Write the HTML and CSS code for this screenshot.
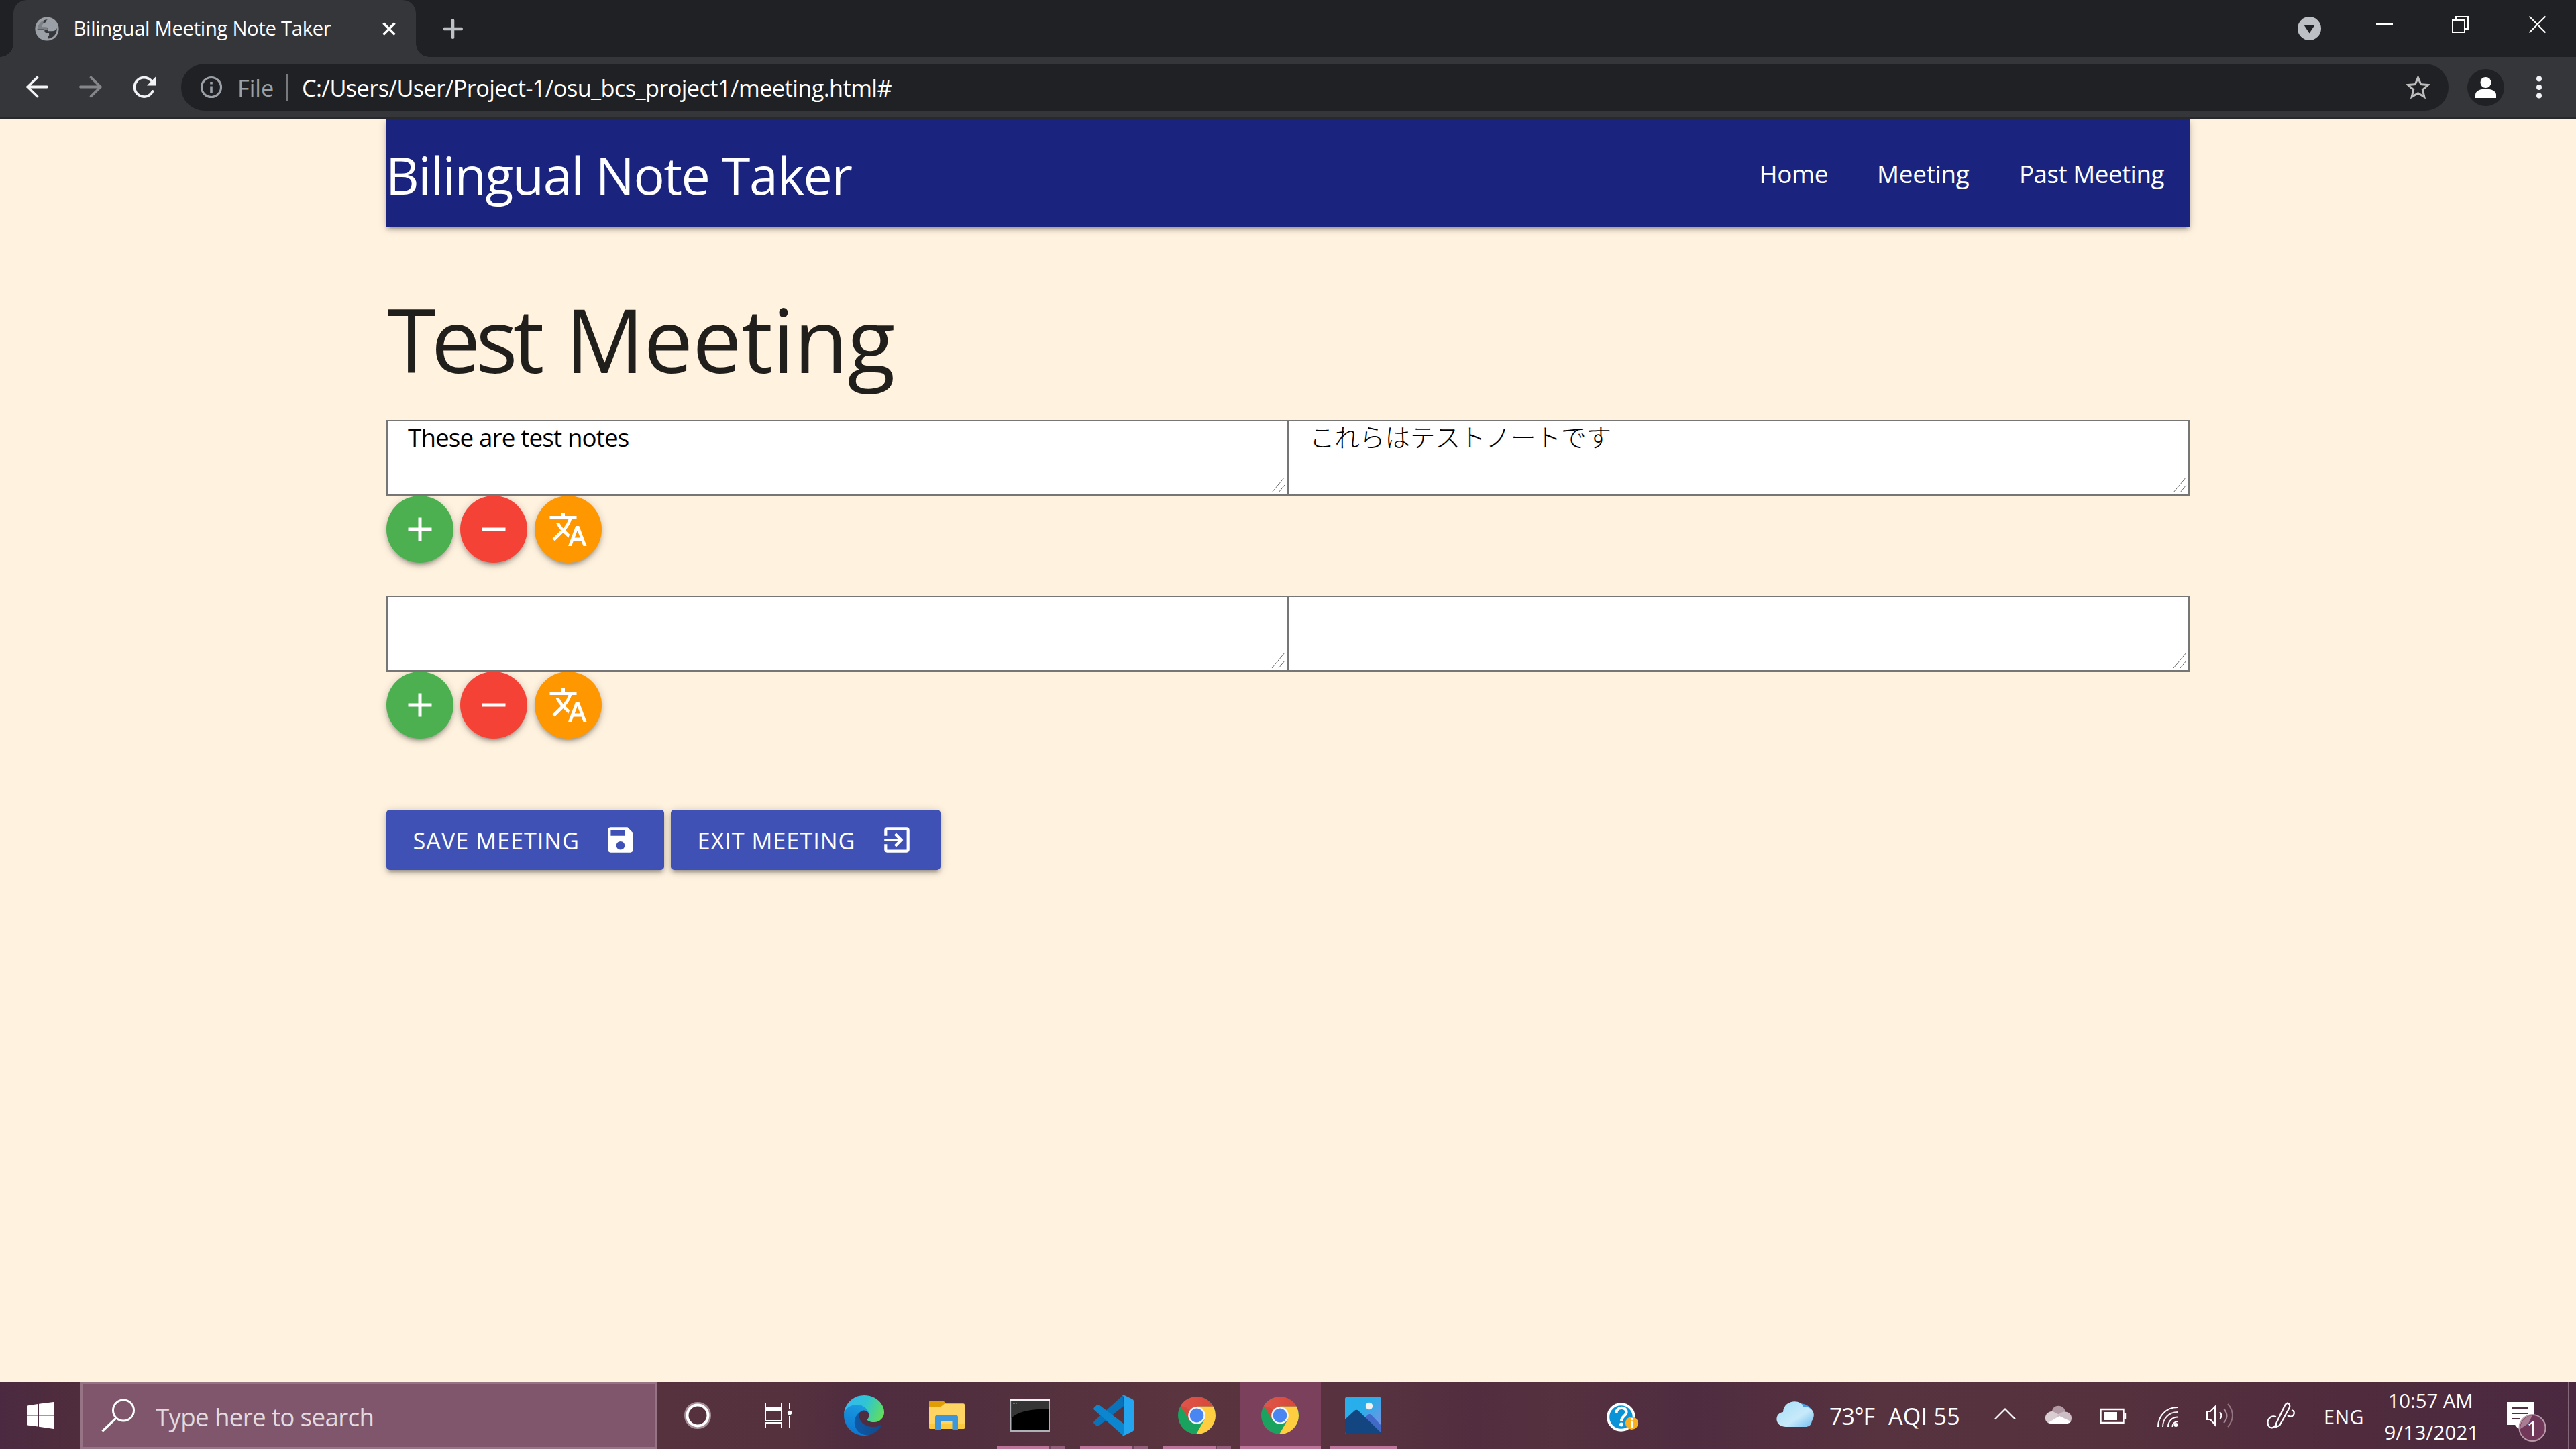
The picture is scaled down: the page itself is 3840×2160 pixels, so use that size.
FILE: index.html
```html
<!DOCTYPE html>
<html lang="en">
<head>
<meta charset="utf-8">
<title>Bilingual Meeting Note Taker</title>
<link rel="stylesheet" href="styles.css">
</head>
<body>
<svg class="defs" width="0" height="0" aria-hidden="true">
  <defs>
    <symbol id="i-translate" viewBox="0 0 24 24"><path d="M12.87 15.07l-2.54-2.51.03-.03c1.74-1.94 2.98-4.17 3.71-6.53H17V4h-7V2H8v2H1v1.99h11.17C11.5 7.92 10.44 9.75 9 11.35 8.07 10.32 7.3 9.19 6.69 8h-2c.73 1.63 1.73 3.17 2.98 4.56l-5.09 5.02L4 19l5-5 3.11 3.11.76-2.04zM18.5 10h-2L12 22h2l1.12-3h4.75L21 22h2l-4.5-12zm-2.62 7l1.62-4.33L19.12 17h-3.24z"/></symbol>
    <symbol id="i-add" viewBox="0 0 24 24"><path d="M19 13h-6v6h-2v-6H5v-2h6V5h2v6h6v2z"/></symbol>
    <symbol id="i-remove" viewBox="0 0 24 24"><path d="M19 13H5v-2h14v2z"/></symbol>
    <symbol id="i-grip" viewBox="0 0 24 24"><path d="M2 22L21 -1M12 22l9-11" stroke="#6a6a6a" stroke-width="1" fill="none"/></symbol>
    <linearGradient id="c-red" x1="0" y1="0" x2="1" y2="0"><stop offset="0" stop-color="#e0564a"/><stop offset="1" stop-color="#d8473a"/></linearGradient>
    <symbol id="i-chrome" viewBox="-28 -28 56 56">
      <circle r="28" fill="#1aa35e"/>
      <path d="M-24.2-14A28 28 0 0 1 24.6-13.2H0L-11.4 6.5Z" fill="url(#c-red)"/>
      <path d="M24.6-13.2A28 28 0 0 1-1 28L11.4 6.5 0-13.2Z" fill="#ffcd40"/>
      <path d="M-24.2-14L-11.4 6.5-7-5-16-12Z" fill="#c5392c" opacity=".35"/>
      <circle r="12.8" fill="#f4f6f8"/><circle r="10.4" fill="#4a86f2"/>
    </symbol>
  </defs>
</svg>

<header class="browser">
  <div class="tabstrip">
    <div class="tab">
      <svg class="favicon" viewBox="0 0 36 36"><circle cx="18" cy="18" r="17.6" fill="#9aa0a6"/><path d="M19 4.200c-3 1.500-2 3.800-4 4.600-2.400.8-4 1.600-4 4v3h6c2 0 2.600 1.400 2.600 3v2.400h6.200c3.300 0 5.600-1.200 7-4.200C33 25.500 27.500 31.500 20.300 32.500c-1.400-1.800-.6-3.700.8-4.800V24h-3.700c-2 0-3-1.200-3-3v-2H3.600C4.300 10.500 10.500 4.300 19 4.200z" fill="#35363a"/><path d="M3 18.500C3.300 11 8 6 14 4.300L11 13v3l6 .4c1.600 0 2 1 2 2.600h-4.600l-1-.5z" fill="#9aa0a6" opacity=".7"/></svg>
      <span class="tab-title">Bilingual Meeting Note Taker</span>
      <svg class="tab-close" viewBox="0 0 20 20"><path d="M1.500 1.500l17 17M18.500 1.500l-17 17" stroke="#fff" stroke-width="3.600" fill="none"/></svg>
    </div>
    <svg class="newtab" viewBox="0 0 30 30"><path d="M15 2.300v25.400M2.300 15h25.400" stroke="#bdc1c6" stroke-width="4.600" stroke-linecap="round"/></svg>
    <svg class="winctl" viewBox="3420 0 420 85">
      <circle cx="3442.500" cy="42.500" r="17.500" fill="#bdc1c6"/><path d="M3434.500 37.500h16l-8 12z" fill="#202124"/>
      <g stroke="#fff" stroke-width="2" fill="none"><path d="M3542 36h25"/><path d="M3656 30h18v18h-18zM3661 30v-5h18v18h-5"/><path d="M3770.500 24.500l24 24M3794.500 24.500l-24 24"/></g>
    </svg>
  </div>
  <div class="toolbar">
    <svg class="nav-icons" viewBox="0 85 270 90">
      <g fill="none" stroke-width="3.800" stroke-linecap="round" stroke-linejoin="round">
        <path d="M70 129.500H41M55.500 115.500l-14.500 14 14.500 14" stroke="#f1f3f4"/>
        <path d="M120 129.500h29M135.500 115.500l14.500 14-14.500 14" stroke="#84868a"/>
        <path d="M227.500 136a14.200 14.200 0 1 1-2.500-16" stroke="#f1f3f4"/>
      </g>
      <path d="M232.500 114v13.500H219z" fill="#f1f3f4"/>
    </svg>
    <div class="omnibox">
      <svg class="info" viewBox="0 0 34 34"><circle cx="17" cy="17" r="14.500" stroke="#9aa0a6" stroke-width="3.200" fill="none"/><path d="M17 9v3.600M17 15.500v9.500" stroke="#9aa0a6" stroke-width="3.600"/></svg>
      <span class="scheme">File</span>
      <span class="sep"></span>
      <span class="url">C:/Users/User/Project-1/osu_bcs_project1/meeting.html#</span>
      <svg class="star" viewBox="0 0 24 24"><path d="M22 9.240l-7.190-.62L12 2 9.190 8.630 2 9.240l5.460 4.730L5.820 21 12 17.270 18.180 21l-1.630-7.030L22 9.240zM12 15.400l-3.760 2.270 1-4.280-3.320-2.880 4.380-.38L12 6.100l1.710 4.040 4.380.38-3.320 2.880 1 4.280L12 15.400z" fill="#bdbdbd"/></svg>
    </div>
    <svg class="menu-icons" viewBox="3650 85 190 90">
      <circle cx="3705.500" cy="130.500" r="27.500" fill="#202124"/><circle cx="3705.500" cy="123" r="8" fill="#fff"/>
      <path d="M3690 146v-5c0-6 8-8.500 15.500-8.500s15.500 2.500 15.500 8.500v5z" fill="#fff"/>
      <g fill="#f1f3f4"><circle cx="3785" cy="117.500" r="4"/><circle cx="3785" cy="130" r="4"/><circle cx="3785" cy="142.500" r="4"/></g>
    </svg>
  </div>
</header>

<main class="page">
  <div class="container">
    <nav class="navbar">
      <a class="brand">Bilingual Note Taker</a>
      <div class="links"><a class="l-home">Home</a><a class="l-meeting">Meeting</a><a class="l-past">Past Meeting</a></div>
    </nav>
    <h1 class="title"><span class="word-a">Test</span> <span class="word-b">Meeting</span></h1>

    <section class="note">
      <div class="areas">
        <div class="area">These are test notes<svg class="grip"><use href="#i-grip"/></svg></div>
        <div class="area ja" lang="ja">これらはテストノートです<svg class="grip"><use href="#i-grip"/></svg></div>
      </div>
      <div class="actions">
        <a class="fab green"><svg><use href="#i-add"/></svg></a>
        <a class="fab red"><svg><use href="#i-remove"/></svg></a>
        <a class="fab orange"><svg><use href="#i-translate"/></svg></a>
      </div>
    </section>
    <section class="note">
      <div class="areas">
        <div class="area"><svg class="grip"><use href="#i-grip"/></svg></div>
        <div class="area"><svg class="grip"><use href="#i-grip"/></svg></div>
      </div>
      <div class="actions">
        <a class="fab green"><svg><use href="#i-add"/></svg></a>
        <a class="fab red"><svg><use href="#i-remove"/></svg></a>
        <a class="fab orange"><svg><use href="#i-translate"/></svg></a>
      </div>
    </section>

    <div class="buttons">
      <a class="btn save"><span>SAVE MEETING</span><svg viewBox="0 0 24 24"><path d="M17 3H5c-1.110 0-2 .9-2 2v14c0 1.100.89 2 2 2h14c1.100 0 2-.9 2-2V7l-4-4zm-5 16c-1.660 0-3-1.340-3-3s1.340-3 3-3 3 1.340 3 3-1.340 3-3 3zm3-10H5V5h10v4z"/></svg></a>
      <a class="btn exit"><span>EXIT MEETING</span><svg viewBox="0 0 24 24"><path d="M10.090 15.590L11.500 17l5-5-5-5-1.410 1.410L12.670 11H3v2h9.670l-2.580 2.590zM19 3H5c-1.110 0-2 .9-2 2v4h2V5h14v14H5v-4H3v4c0 1.100.89 2 2 2h14c1.100 0 2-.9 2-2V5c0-1.100-.9-2-2-2z"/></svg></a>
    </div>
  </div>
</main>

<footer class="taskbar">
  <div class="start"><svg viewBox="0 0 40 40"><path d="M0 5.500L16.500 3v16H0zM18 2.800L40 0v19H18zM0 20.500h16.500v16L0 34.500zM18 20.500h22V40l-22-3.200z" fill="#fff"/></svg></div>
  <div class="search">
    <svg viewBox="0 0 50 50"><circle cx="33" cy="17.500" r="15.500" stroke="#fff" stroke-width="3" fill="none"/><path d="M22 29L1.500 48.500" stroke="#fff" stroke-width="3.200"/></svg>
    <span>Type here to search</span>
  </div>
  <div class="sys"><svg viewBox="980 2060 120 100"><circle cx="1040" cy="2110" r="18" stroke="#a68d98" stroke-width="4" fill="none"/><circle cx="1040" cy="2110" r="15.500" stroke="#fff" stroke-width="4" fill="none"/></svg></div>
  <div class="sys"><svg viewBox="1100 2060 120 100"><g stroke="#fff" stroke-width="2" fill="none"><path d="M1141 2091v8h24v-8M1141 2102h24v16h-24zM1141 2129v-8h24v8M1177 2091v10M1177 2111v18"/></g><circle cx="1177" cy="2106" r="3.200" fill="#fff"/></svg></div>
  <div class="apps">
    <div class="app"><svg width="60" height="60" viewBox="0 0 256 256">
      <defs>
        <linearGradient id="e1" x1="0" x2="1"><stop offset="0" stop-color="#0f5aa8"/><stop offset="1" stop-color="#114a8b"/></linearGradient>
        <linearGradient id="e2" x1=".6" y1="0" x2=".3" y2="1"><stop offset="0" stop-color="#1b9de2"/><stop offset="1" stop-color="#0a75d1"/></linearGradient>
        <linearGradient id="e3" x1="0" y1=".3" x2="1" y2=".6"><stop offset="0" stop-color="#35b7f3"/><stop offset=".5" stop-color="#2fc5d2"/><stop offset="1" stop-color="#62dd5c"/></linearGradient>
      </defs>
      <path fill="url(#e1)" d="M231 190.500c-3.400 1.800-6.900 3.400-10.500 4.700-11.500 4.300-23.600 6.500-35.900 6.500-47.300 0-88.500-32.500-88.500-74.300.1-11.400 6.400-21.900 16.400-27.300-42.800 1.800-53.800 46.400-53.800 72.500 0 74 68.100 81.400 82.800 81.400 7.900 0 19.800-2.300 27-4.600l1.300-.4c27.600-9.500 51-28.100 66.600-52.800 1.200-1.900.6-4.300-1.200-5.500-1.300-.8-2.900-.9-4.200-.2z"/>
      <path fill="url(#e2)" d="M105.700 241.400c-8.900-5.500-16.600-12.800-22.700-21.300-26.300-36-18.400-86.500 17.600-112.800 3.800-2.700 7.700-5.200 11.900-7.200 3.100-1.500 8.400-4.100 15.500-4 10.100.1 19.600 4.900 25.700 13 4 5.400 6.300 11.900 6.400 18.700 0-.2 24.500-79.600-80-79.600-43.900 0-80 41.700-80 78.200-.2 19.300 4 38.500 12.100 56 27.600 58.800 94.800 87.600 156.400 67.100-21.100 6.600-44.100 3.700-62.900-8.100z"/>
      <path fill="url(#e3)" d="M152.300 148.900c-.8 1-3.300 2.500-3.300 5.700 0 2.600 1.700 5.100 4.700 7.200 14.400 10 41.500 8.700 41.600 8.700 10.700 0 21.100-2.900 30.300-8.300 18.800-11 30.400-31.100 30.400-52.900.3-22.400-8-37.300-11.300-43.900C223.500 23.900 177.700 0 128 0 58 0 1 56.200 0 126.200c.5-36.500 36.800-66 80-66 3.500 0 23.500.3 42 10.100 16.300 8.600 24.900 18.900 30.800 29.200 6.200 10.700 7.300 24.100 7.300 29.500s-2.700 13.300-7.800 19.900z"/>
    </svg></div>
    <div class="app"><svg width="53" height="44" viewBox="0 0 53 44"><path d="M0 9V1.500Q0 0 1.500 0H19q2 0 3.500 1.500L25 5v4z" fill="#e09e04"/><path d="M0 9h17.500l6-4.800H51q2 0 2 2V40q0 2-2 2H2q-2 0-2-2z" fill="#fed462"/><path d="M0 34h53v6q0 2-2 2H2q-2 0-2-2z" fill="#fbc93d"/><path d="M9 44V24.500q0-2.500 2.500-2.500h29q2.500 0 2.500 2.500V44h-8.500V31h-17v13z" fill="#3d97da"/></svg></div>
    <div class="app multi"><svg width="59" height="48" viewBox="0 0 59 48"><path d="M0 0h59v48H0z" fill="#aeb2b6"/><path d="M0 0h59v2.500H0z" fill="#f1f2f4"/><path d="M1.500 3h56v43h-56z" fill="#000"/><path d="M1.500 3h56v12C35 14 12 17 1.500 28z" fill="#353535"/><path d="M4 6h3M8 6h2M5 8.500h5" stroke="#aaa"/></svg></div>
    <div class="app multi"><svg width="60" height="60" viewBox="0 0 60 60"><path d="M44 0l1 16L8 45.500q-2 1-4-.5l-3.500-3.500q-1-1.500.5-3z" fill="#0a72b8"/><path d="M.8 21.500q-1.300-1.500 0-3L5 14.500q2-1 4 .3L46 43l-1 17q-2-.5-3-2z" fill="#0b86cf"/><path d="M43 .6q1.500-1 3.500-.3L58 5.800q2 1 2 3V51q0 2-2 3l-11.500 5.600q-2 .8-3.800-.3 2.300.3 2.300-2.800V3.800Q45 1 43 .6z" fill="#23a6ef"/></svg></div>
    <div class="app multi"><svg width="56" height="56"><use href="#i-chrome"/></svg></div>
    <div class="app active"><svg width="56" height="56"><use href="#i-chrome"/></svg></div>
    <div class="app single"><svg width="54" height="54" viewBox="0 0 54 54"><defs><linearGradient id="p1" x1="0" y1="0" x2="1" y2="1"><stop offset=".4" stop-color="#28aeea"/><stop offset="1" stop-color="#8a8be0"/></linearGradient></defs><rect width="54" height="54" rx="2" fill="url(#p1)"/><circle cx="36" cy="13" r="5.200" fill="#f1f1f1"/><path d="M24 37l10-11q2.500-2 5 0l15 16v12H30z" fill="#4169c8"/><path d="M0 33l14-13q3-2.500 6 0l34 33v1H2q-2 0-2-2z" fill="#134580"/></svg></div>
  </div>
  <svg class="help" width="60" height="100" viewBox="2390 2060 60 100"><circle cx="2416.500" cy="2112.500" r="19.300" fill="#0a93d6" stroke="#fff" stroke-width="4"/><path d="M2409.500 2106c0-9 15-9.500 15-1 0 6-7 5.500-7.500 13" stroke="#fff" stroke-width="4.200" fill="none"/><circle cx="2417" cy="2123.500" r="3" fill="#fff"/><circle cx="2432.500" cy="2121.500" r="9.600" fill="#f8b020"/><path d="M2433 2114v3.200M2433 2119v9" stroke="#fff" stroke-width="3.200"/></svg>
  <div class="tray">
    <svg width="72" height="100" viewBox="2640 2060 72 100"><defs><linearGradient id="w" x1="0" x2="1" y2="1"><stop offset="0" stop-color="#a4def8"/><stop offset=".6" stop-color="#c8eafa"/><stop offset="1" stop-color="#6fbdf0"/></linearGradient></defs><path d="M2682 2092c10 0 17 5 20 13l-4 17-24-10z" fill="#4a9de0"/><path d="M2663 2127c-19 0-18-21-5-22 1-19 27-20 30-8 16 0 19 13 13 21-1 7-5 9-10 9z" fill="url(#w)"/></svg>
    <span class="t-temp">73°F</span>
    <span class="t-aqi">AQI 55</span>
    <svg width="48" height="100" viewBox="2965 2060 48 100"><path d="M2974 2115.500l15-15 15 15" stroke="#fff" stroke-width="2.200" fill="none"/></svg>
    <svg width="58" height="100" viewBox="3040 2060 58 100"><path d="M3059 2104c1-11 18-11 20 1l-10 12z" fill="#b199a3"/><path d="M3053 2121c-8-4-4-18 7-17l14 7-9 11z" fill="#d9cdd2"/><path d="M3066 2112c8-12 22-8 22 2 0 5-3 7-5 7z" fill="#cdbec5"/><path d="M3053 2121l17-10 17 8q-2 3-5 3h-25q-3 0-4-1z" fill="#fff"/></svg>
    <svg width="56" height="100" viewBox="3122 2060 56 100"><path d="M3131.500 2101h34v20h-34zM3168 2107v8" stroke="#fff" stroke-width="2.400" fill="none"/><path d="M3136 2105h20v12h-20z" fill="#fff"/></svg>
    <svg width="48" height="100" viewBox="3208 2060 48 100"><g stroke="#fff" stroke-width="2" fill="none"><path d="M3217 2127c0-16 12-29 29-29"/><path d="M3224 2127c0-12 9-22 22-22" opacity=".9"/><path d="M3232 2127c0-8 6-14.500 14-14.500"/><path d="M3238.500 2127c0-4.500 3-8 7.500-8"/></g><circle cx="3243.500" cy="2124" r="3" fill="#fff"/></svg>
    <svg width="58" height="100" viewBox="3280 2060 58 100"><g stroke="#fff" stroke-width="2" fill="none"><path d="M3290 2104h5l7-7v27l-7-8h-5z"/><path d="M3309 2105q5 5 0 11"/><path d="M3315 2100q9 11 0 21" stroke="#a68d98"/><path d="M3321 2093q14 17 0 34" stroke="#917480"/></g></svg>
    <svg width="56" height="100" viewBox="3372 2060 56 100"><g stroke="#fff" stroke-width="2.300" fill="none" stroke-linejoin="round"><path d="M3393 2122l13-27q4-6 7-1 1 3-1 6l-14 25-5 2z"/><path d="M3393 2112c-10-3-14 6-12 12 2 6 10 6 12-2M3410 2110c8 6 14-6 6-8"/></g></svg>
    <span class="t-eng">ENG</span>
    <div class="clock"><span class="t-time">10:57 AM</span><span class="t-date">9/13/2021</span></div>
    <div class="notif">
      <svg width="72" height="100" viewBox="3730 2060 72 100"><path d="M3737 2090h40v34h-19l-4 6-5-6h-12z" fill="#fff"/><path d="M3745 2099h24M3745 2107h24M3745 2115h12" stroke="#52303f" stroke-width="2"/><circle cx="3775" cy="2128.500" r="19.500" fill="#71385a" stroke="#b999a8" stroke-width="2"/><path d="M3757 2130a19 19 0 0 1 18-20l-6 12z" fill="#a87d92"/></svg>
      <span class="badge">1</span>
    </div>
    <i class="peek"></i>
  </div>
</footer>
</body>
</html>
```
FILE: styles.css
```css
* { box-sizing: border-box; }
html, body { margin: 0; height: 100%; }
body {
  display: flex;
  flex-direction: column;
  width: 3840px;
  height: 2160px;
  overflow: hidden;
  font-family: "Open Sans", "Noto Sans CJK JP", sans-serif;
  white-space: nowrap;
}
svg { display: block; flex: none; }
.defs { position: absolute; }

/* browser chrome */
.browser { height: 178px; flex: none; background: #35363a; border-bottom: 3px solid #28292c; }
.tabstrip { display: flex; height: 85px; background: #202124; }
.tab {
  display: flex;
  align-items: center;
  position: relative;
  width: 600px;
  height: 85px;
  margin-left: 20px;
  padding-left: 32px;
  background: #35363a;
  border-radius: 20px 20px 0 0;
}
.tab::before, .tab::after {
  content: "";
  position: absolute;
  bottom: 0;
  width: 20px;
  height: 20px;
}
.tab::before { left: -20px; background: radial-gradient(circle at 0 0, #202124 19.500px, #35363a 20px); }
.tab::after { right: -20px; background: radial-gradient(circle at 100% 0, #202124 19.500px, #35363a 20px); }
.favicon { width: 36px; height: 36px; }
.tab-title { width: 460px; margin-left: 21.500px; padding-bottom: 1px; font-size: 29.300px; letter-spacing: -.33px; color: #fff; }
.tab-close { width: 20px; height: 20px; }
.newtab { width: 30px; height: 30px; margin: 27.500px 0 0 40px; }
.winctl { width: 420px; height: 85px; margin-left: auto; }
.toolbar { display: flex; height: 90px; }
.nav-icons { width: 270px; height: 90px; }
.omnibox {
  display: flex;
  align-items: center;
  width: 3380px;
  height: 70px;
  margin-top: 10px;
  padding: 0 23px 0 28px;
  border-radius: 35px;
  background: #202124;
  font-size: 34.300px;
}
.info { width: 34px; height: 34px; }
.scheme { width: 73px; margin-left: 22px; color: #9aa0a6; }
.sep { width: 2px; height: 40px; background: #77797d; }
.url { margin-left: 21px; letter-spacing: -.59px; color: #fff; }
.star { width: 45px; height: 45px; margin-left: auto; }
.menu-icons { width: 190px; height: 90px; }

/* page */
.page { flex: 1; min-height: 0; background: #fff2df; overflow: hidden; }
.container { width: 2688px; margin: 0 auto; }
.navbar {
  display: flex;
  justify-content: space-between;
  height: 160px;
  background: #1a237e;
  color: #fff;
  line-height: 160px;
}
.navbar, .fab, .btn {
  box-shadow: 0 5px 5px 0 rgba(0,0,0,.14), 0 7.500px 2.500px -5px rgba(0,0,0,.12), 0 2.500px 12.500px 0 rgba(0,0,0,.2);
}
.brand { margin-left: -1px; padding-top: 3px; font-size: 77px; letter-spacing: -1.370px; }
.links { display: grid; grid-template-columns: 175.500px 212px 254px; padding-top: 1px; font-size: 36.750px; }
.l-home { letter-spacing: -.3px; }
.l-meeting { letter-spacing: -.23px; }
.l-past { letter-spacing: -.5px; }
.title {
  height: 180px;
  margin: 77px 0 31px 1.500px;
  font-size: 131px;
  font-weight: 400;
  line-height: 180px;
  color: #211f1c;
}
.word-a { letter-spacing: -7px; }
.word-b { margin-left: 4px; letter-spacing: -.7px; }
.note { height: 262.500px; }
.note + .note { height: 262px; margin-top: -.5px; }
.areas { display: flex; height: 113px; }
.area {
  position: relative;
  width: 1344px;
  height: 113px;
  padding: 0 30px;
  border: 2px solid #767676;
  background: #fff;
  font-size: 36.750px;
  line-height: 49px;
  letter-spacing: -.85px;
  color: #000;
}
.ja { font-family: "Noto Sans CJK JP", sans-serif; font-weight: 300; font-size: 37.500px; line-height: 43px; letter-spacing: 0; }
.grip { position: absolute; right: 0; bottom: 1px; width: 24px; height: 24px; }
.actions { display: flex; gap: 10px; }
.fab {
  display: flex;
  align-items: center;
  justify-content: center;
  width: 100px;
  height: 100px;
  border-radius: 50%;
}
.fab.orange { margin-left: 1px; }
.fab svg { width: 60px; height: 60px; fill: #fff; }
.green { background: #4caf50; }
.red { background: #f44336; }
.orange { background: #ff9800; }
.buttons { display: flex; gap: 10px; margin-top: 57px; }
.btn {
  display: flex;
  align-items: center;
  justify-content: space-between;
  height: 90px;
  padding: 0 40px 0 39.500px;
  border-radius: 5px;
  background: #3f51b5;
  color: #fff;
  font-size: 34.300px;
  letter-spacing: .95px;
}
.btn svg { width: 50px; height: 50px; fill: #fff; }
.save { width: 414px; }
.exit { width: 402px; }

/* taskbar */
.taskbar {
  display: flex;
  flex: none;
  height: 100px;
  background: linear-gradient(90deg, #4b2a41 0, #502d3c 120px, #56323e 980px, #55313e 1180px, #4f2c3f 1290px, #53303e 1500px, #5a353f 1760px, #57323f 2050px, #512d3f 2200px, #55313f 2320px, #4f2c40 2520px, #57323f 2800px, #55303d 3150px, #502b3d 3500px, #4a2940 3840px);
  color: #fff;
}
.start { display: flex; align-items: center; justify-content: center; width: 120px; }
.start svg { width: 40px; height: 40px; }
.search {
  display: flex;
  align-items: center;
  width: 860px;
  padding: 0 0 0 28px;
  border: 3px solid #967486;
  background: #7f566c;
  font-size: 36.750px;
  letter-spacing: -.68px;
  color: #e3dadf;
}
.search svg { width: 50px; height: 50px; }
.search span { margin: 3px 0 0 31px; }
.sys { width: 120px; }
.apps { display: flex; gap: 3px; margin-left: 8px; }
.app { display: flex; align-items: center; justify-content: center; position: relative; width: 121px; height: 100px; padding-right: 1.500px; }
.multi::after, .single::after, .active::after {
  content: "";
  position: absolute;
  left: 10px;
  bottom: 0;
  width: 101px;
  height: 5px;
  background: #bb7598;
}
.multi::after { background: linear-gradient(90deg, #bb7598 78px, #6d465a 78px, #6d465a 80.500px, #935f7a 80.500px); }
.active { background: #7b405c; }
.active::after { left: 0; width: 121px; }
.help { margin-left: 297px; }
.tray {
  display: grid;
  grid-template-columns: 87px 88px 150px 75px 82px 86px 72px 92px 92px 85px 181px 98px 2px;
  margin-left: 190px;
  align-items: center;
}
.t-temp { padding-top: 2px; font-size: 34px; letter-spacing: -1px; }
.t-aqi { padding-top: 2px; font-size: 34px; letter-spacing: .3px; }
.t-eng { padding-top: 2px; font-size: 28.700px; letter-spacing: .5px; }
.clock { display: flex; flex-direction: column; padding-top: 4px; font-size: 29.300px; line-height: 47px; }
.t-time { margin-left: 10.500px; }
.t-date { margin-left: 5.500px; letter-spacing: .25px; }
.notif { position: relative; }
.badge { position: absolute; left: 25px; top: 48px; width: 40px; font-size: 30px; line-height: 41px; text-align: center; }
.peek { height: 100px; background: #83687a; }
```
